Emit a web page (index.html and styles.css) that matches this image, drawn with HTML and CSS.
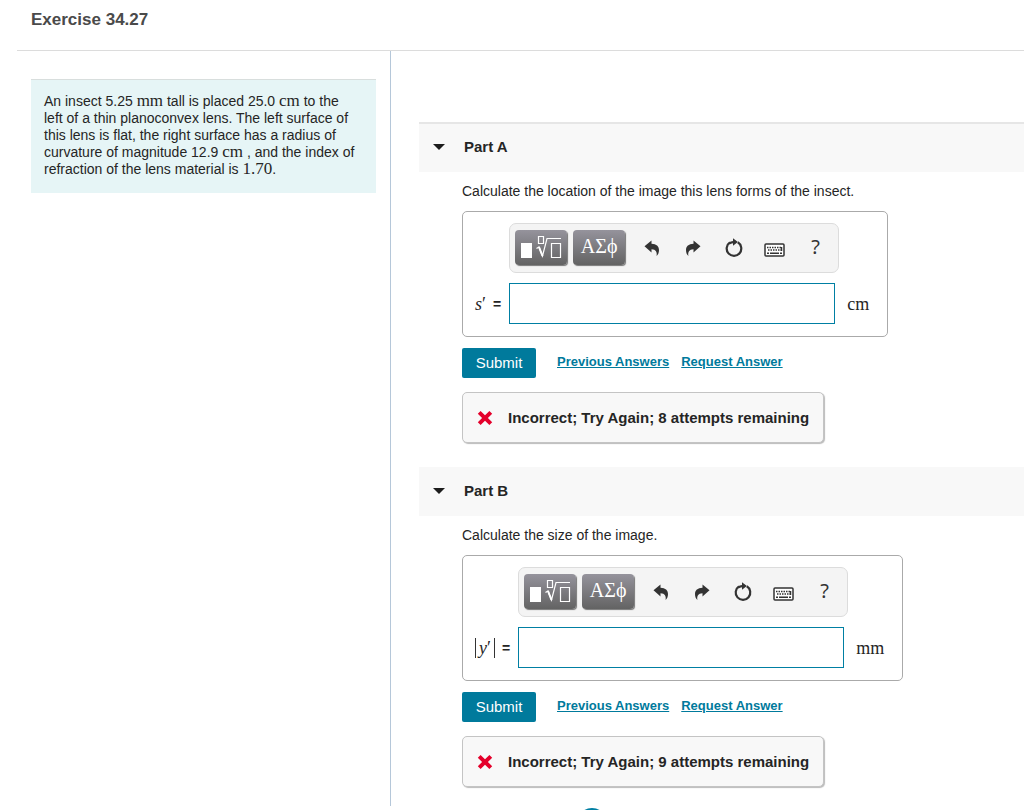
FILE: index.html
```html
<!DOCTYPE html>
<html lang="en">
<head>
<meta charset="utf-8">
<meta name="viewport" content="width=device-width, initial-scale=1">
<title>Exercise 34.27</title>
<link rel="stylesheet" href="styles.css">
</head>
<body>
<svg class="sprite" aria-hidden="true">
  <symbol id="i-template" viewBox="0 0 42 26">
    <rect x="1" y="9" width="11" height="15" fill="#fff"/>
    <path d="M18.500 2.500h5v7h-5zM31.500 9.500h9v14h-9zM16.500 14.500l2.500-1.500 3.500 9L27 4.500h14" fill="none" stroke="#fff" stroke-width="1.200"/>
    <path d="M19 13l3.500 9" stroke="#fff" stroke-width="2"/>
  </symbol>
  <symbol id="i-undo" viewBox="0 0 16 16">
    <path d="M.5 6.300L7.500.500v3.300c5 .2 7.500 2.700 7.500 6.200 0 2.500-.8 4.500-2.400 6 .6-3.900-.6-6.500-5.100-6.700v3.200z"/>
  </symbol>
  <symbol id="i-reset" viewBox="0 0 20 20">
    <path d="M13.800 4.300A7.300 7.300 0 1 1 6 4.400" fill="none" stroke="currentColor" stroke-width="2.200"/>
    <path d="M9 .300L13.900 4 9 7.800V5.300C7.600 5.500 6.500 6 5.500 6.600L4.700 4.700C6 3.800 7.500 3.200 9 3z"/>
  </symbol>
  <symbol id="i-keyboard" viewBox="0 0 22 14">
    <rect x="1" y="1" width="19" height="12" rx="1" fill="#fff" stroke="currentColor" stroke-width="1.500"/>
    <path d="M3 4.500h15M4 7h14" stroke="currentColor" stroke-width="1.500" stroke-dasharray="1.500 1"/>
    <path d="M3 10.200h2M6 10.200h9M16 10.200h2M17.500 4v4" stroke="currentColor" stroke-width="1.500"/>
  </symbol>
  <symbol id="i-wrong" viewBox="0 0 16 16">
    <path d="M3.600 1L8 5.200 12.400 1 15.200 3.800 10.900 8l4.300 4.200-2.800 2.800L8 10.800 3.600 15 .8 12.200 5.100 8 .8 3.800z" fill="#e4002b"/>
  </symbol>
</svg>

<div class="page">
  <header class="page-head"><h1 class="title">Exercise 34.27</h1></header>
  <div class="columns">
    <aside class="side">
      <p class="problem">An insect 5.25 <span class="math">mm</span> tall is placed 25.0 <span class="math">cm</span> to the left of a thin planoconvex lens. The left surface of this lens is flat, the right surface has a radius of curvature of magnitude 12.9 <span class="math">cm</span> , and the index of refraction of the lens material is <span class="math">1.70</span>.</p>
    </aside>
    <main class="work">
      <section class="part">
        <h2 class="part-head part-head-first"><button class="toggle" type="button" aria-expanded="true"><span class="caret"></span>Part A</button></h2>
        <form class="part-body">
          <p class="question">Calculate the location of the image this lens forms of the insect.</p>
          <div class="answer">
            <div class="toolbar">
              <button class="tool" type="button" aria-label="Templates"><svg class="template"><use href="#i-template"/></svg></button>
              <button class="tool" type="button">ΑΣϕ</button>
              <div class="actions">
                <button class="action" type="button" aria-label="Undo"><svg class="arrow"><use href="#i-undo"/></svg></button>
                <button class="action" type="button" aria-label="Redo"><svg class="arrow flip"><use href="#i-undo"/></svg></button>
                <button class="action" type="button" aria-label="Reset"><svg class="reset"><use href="#i-reset"/></svg></button>
                <button class="action" type="button" aria-label="Keyboard shortcuts"><svg class="keyboard"><use href="#i-keyboard"/></svg></button>
                <button class="action help" type="button">?</button>
              </div>
            </div>
            <label class="var" for="answer-a"><span class="math large"><i>s</i>′</span><span class="eq">=</span></label>
            <input class="field" id="answer-a" type="text">
            <span class="math large">cm</span>
          </div>
          <div class="controls">
            <button class="submit" type="button">Submit</button>
            <a class="link" href="#previous-a">Previous Answers</a>
            <a class="link" href="#request-a">Request Answer</a>
          </div>
          <p class="feedback"><svg class="wrong"><use href="#i-wrong"/></svg>Incorrect; Try Again; 8 attempts remaining</p>
        </form>
      </section>
      <section class="part">
        <h2 class="part-head"><button class="toggle" type="button" aria-expanded="true"><span class="caret"></span>Part B</button></h2>
        <form class="part-body">
          <p class="question">Calculate the size of the image.</p>
          <div class="answer">
            <div class="toolbar">
              <button class="tool" type="button" aria-label="Templates"><svg class="template"><use href="#i-template"/></svg></button>
              <button class="tool" type="button">ΑΣϕ</button>
              <div class="actions">
                <button class="action" type="button" aria-label="Undo"><svg class="arrow"><use href="#i-undo"/></svg></button>
                <button class="action" type="button" aria-label="Redo"><svg class="arrow flip"><use href="#i-undo"/></svg></button>
                <button class="action" type="button" aria-label="Reset"><svg class="reset"><use href="#i-reset"/></svg></button>
                <button class="action" type="button" aria-label="Keyboard shortcuts"><svg class="keyboard"><use href="#i-keyboard"/></svg></button>
                <button class="action help" type="button">?</button>
              </div>
            </div>
            <label class="var" for="answer-b"><span class="math large abs"><i>y</i>′</span><span class="eq">=</span></label>
            <input class="field" id="answer-b" type="text">
            <span class="math large">mm</span>
          </div>
          <div class="controls">
            <button class="submit" type="button">Submit</button>
            <a class="link" href="#previous-b">Previous Answers</a>
            <a class="link" href="#request-b">Request Answer</a>
          </div>
          <p class="feedback"><svg class="wrong"><use href="#i-wrong"/></svg>Incorrect; Try Again; 9 attempts remaining</p>
        </form>
      </section>
      <div class="badge"></div>
    </main>
  </div>
</div>
</body>
</html>
```
FILE: styles.css
```css
* { box-sizing: border-box; }
body {
  margin: 0;
  background: #fff;
  color: #252525;
  font: 14px/18px "Liberation Sans", Arial, sans-serif;
}
h1, h2, p { margin: 0; }
button { font: inherit; color: inherit; border: 0; padding: 0; background: none; cursor: pointer; }
svg { display: block; fill: currentColor; }
.sprite { position: absolute; width: 0; height: 0; }

.page { display: flex; flex-direction: column; height: 100vh; overflow: hidden; }
.page-head { margin-left: 17px; padding: 10px 14px 20px; border-bottom: 1px solid #dcdcdc; }
.title { font-size: 17px; line-height: 20px; color: #4a4a4a; }
.columns { display: flex; flex: 1; min-height: 0; }
.side { flex: 0 0 391px; margin-bottom: 4px; padding: 28px 14px 0 31px; border-right: 1px solid #b5c7d9; }
.problem {
  padding: 13px 18px 15px 13px;
  background: #e6f5f6;
  border-top: 1px solid #d8dedd;
  line-height: 17px;
}
.work { flex: 1; min-width: 0; padding: 71px 0 0 28px; overflow: hidden; }
.math { font-family: "Liberation Serif", "Times New Roman", serif; font-size: 17px; line-height: 14px; }
.large { font-size: 18px; line-height: 20px; }

.part { margin-bottom: 24px; }
.part-head { padding-bottom: 1px; background: #f8f8f8; font-size: 15px; line-height: 48px; }
.part-head-first { padding-bottom: 2px; border-top: 2px solid #e6e6e6; line-height: 46px; }
.toggle { display: flex; align-items: center; gap: 19px; padding-left: 14px; font-weight: bold; }
.caret { border: 6px solid transparent; border-top: 6px solid #1d1d1d; border-bottom: 0; }
.part-body { display: flex; flex-direction: column; align-items: flex-start; padding: 10px 0 0 43px; }
.question { margin-bottom: 11px; }

.answer {
  display: grid;
  grid-template-columns: auto 330px auto;
  align-items: center;
  gap: 10px 8px;
  padding: 11px 18px 12px 12px;
  border: 1px solid #aaa;
  border-radius: 5px;
}
.toolbar {
  grid-column: 2 / 4;
  justify-self: start;
  display: flex;
  align-items: flex-start;
  gap: 6px;
  width: 330px;
  height: 50px;
  padding: 6px 0 0 5px;
  background: #f4f4f4;
  border: 1px solid #dcdcdc;
  border-radius: 7px;
}
.tool {
  display: flex;
  align-items: center;
  justify-content: center;
  width: 52px;
  height: 35px;
  padding-bottom: 2px;
  border-radius: 4px;
  background: linear-gradient(#95939c, #636363);
  box-shadow: 1px 1px 1px #777;
  color: #fff;
  font: 20px/33px "Liberation Serif", "Times New Roman", serif;
}
.template { width: 42px; height: 26px; }
.actions { display: flex; color: #333; }
.action { display: flex; align-items: center; justify-content: center; width: 41px; height: 35px; }
.arrow { width: 16px; height: 16px; }
.flip { transform: scaleX(-1); }
.reset { width: 20px; height: 20px; }
.keyboard { width: 22px; height: 14px; margin-top: 4px; }
.help { padding-bottom: 2px; font: 20px/33px "Noto Sans", sans-serif; }
.var { display: flex; align-items: center; gap: 7px; }
.abs { padding: 0 3px; border: solid #333; border-width: 0 1px; }
.eq { font-weight: bold; }
.field { width: 326px; height: 41px; padding: 0 8px; border: 1px solid #007fa3; border-radius: 0; background: #fff; font: inherit; }

.controls { display: flex; align-items: center; margin: 11px 0 14px; }
.submit { width: 74px; height: 30px; margin-right: 21px; border-radius: 2px; background: #007a9c; color: #fff; font-size: 15px; }
.link { margin-right: 12px; padding-bottom: 2px; color: #007a9c; font-size: 13px; font-weight: bold; }
.feedback {
  display: flex;
  align-items: center;
  gap: 15px;
  height: 51px;
  padding: 0 14px;
  background: #f8f8f8;
  border: 1px solid #c4c4c4;
  border-radius: 5px;
  box-shadow: 1px 1px 1px #bbb;
  font-size: 15px;
  font-weight: bold;
}
.wrong { width: 16px; height: 16px; }
.badge { width: 30px; height: 30px; margin: -3px 0 0 158px; border-radius: 50%; background: #007fa3; }
```
